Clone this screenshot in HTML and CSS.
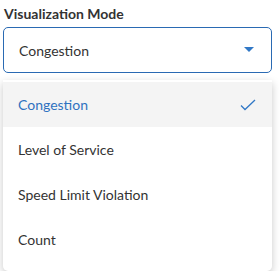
FILE: index.html
```html
<!DOCTYPE html>
<html lang="en">

<head>
  <meta charset="UTF-8">
  <title>Visualization Mode</title>
  <link rel="stylesheet" href="styles.css">
</head>

<body>
  <div class="field">
    <label class="field-label">Visualization Mode</label>
    <div class="select">
      <span>Congestion</span>
      <svg class="caret" width="10" height="6" viewBox="0 0 10 6"><path d="M0 0h10L5 5z" fill="#3178c6"/></svg>
    </div>
    <ul class="menu">
      <li class="item selected">
        <span>Congestion</span>
        <svg width="16" height="12" viewBox="0 0 16 12"><path d="M1 6.5l4 4L15 1" fill="none" stroke="#3178c6" stroke-width="1.3"/></svg>
      </li>
      <li class="item">Level of Service</li>
      <li class="item">Speed Limit Violation</li>
      <li class="item">Count</li>
    </ul>
  </div>
</body>

</html>
```

FILE: styles.css
```css
* {
  box-sizing: border-box;
}

body {
  margin: 0;
  padding: 0;
  background: white;
  font-family: Lato, 'Noto Sans', sans-serif;
  color: #333;
}

.field {
  padding: 5px 8px 0 3px;
  display: flex;
  flex-direction: column;
}

.field-label {
  font-size: 14px;
  font-weight: 700;
  color: #333;
  padding-left: 1px;
  margin-bottom: 5px;
}

.select {
  height: 46px;
  border: 1px solid #2a6ab3;
  border-radius: 5px;
  display: flex;
  align-items: center;
  justify-content: space-between;
  padding: 0 17px 0 15px;
  font-size: 14px;
}

.menu {
  list-style: none;
  margin: 7px 0 0;
  padding: 2px 0 9px;
  background: white;
  border-radius: 0 0 5px 5px;
  box-shadow: 0 3px 8px rgba(0, 0, 0, 0.22);
}

.item {
  height: 45px;
  display: flex;
  align-items: center;
  justify-content: space-between;
  padding: 0 16px 0 15px;
  font-size: 14px;
}

.item.selected {
  background: #f4f4f4;
  color: #2f72c0;
}
```
